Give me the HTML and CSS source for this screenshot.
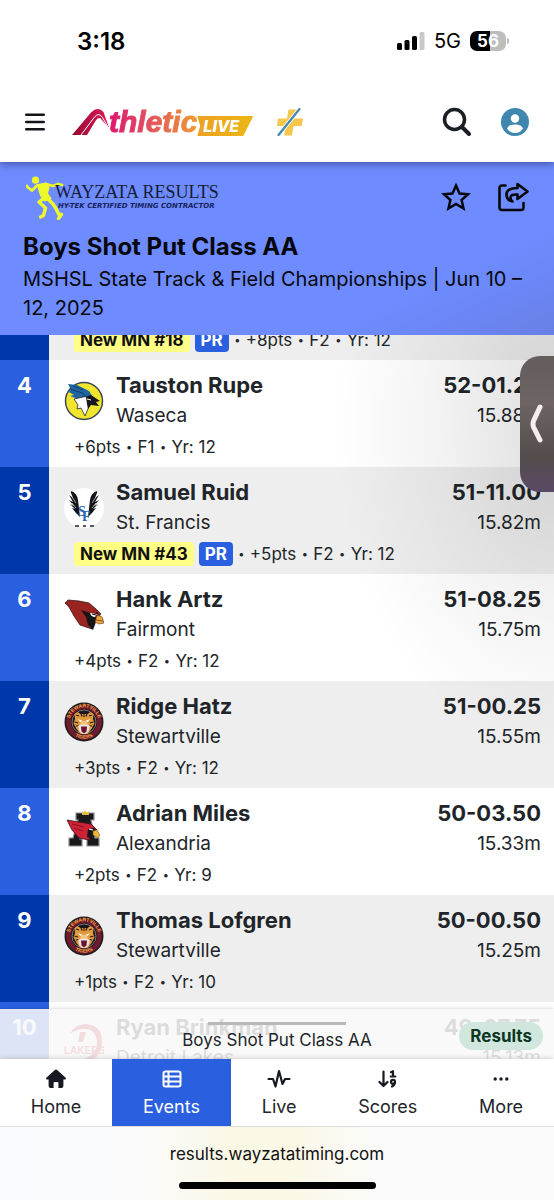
FILE: index.html
```html
<!DOCTYPE html>
<html lang="en">
<head>
<meta charset="utf-8">
<meta name="viewport" content="width=device-width, initial-scale=1">
<title>Boys Shot Put Class AA</title>
<link rel="stylesheet" href="styles.css">
</head>
<body>
<svg class="defs" width="0" height="0" aria-hidden="true">
  <symbol id="tiger" viewBox="0 0 40 40">
    <circle cx="20" cy="20" r="19.5" fill="#211c20"/>
    <circle cx="20" cy="20" r="17.8" fill="#701b2c"/>
    <circle cx="20" cy="20" r="13" fill="#17161a"/>
    <circle cx="20" cy="20" r="12" fill="none" stroke="#a9a4a4" stroke-width=".7"/>
    <path id="arcTop" d="M6 24A14.6 14.6 0 1 1 34 24" fill="none"/>
    <path id="arcLow" d="M8 32A18 18 0 0 0 32 32" fill="none"/>
    <text class="crest-text"><textPath href="#arcTop" startOffset="50%" text-anchor="middle">STEWARTVILLE</textPath></text>
    <text class="crest-text"><textPath href="#arcLow" startOffset="50%" text-anchor="middle">TIGERS</textPath></text>
    <path d="M10.500 12l3-2 3 2h7l3-2 3 2-.5 5 1.500 4-3 6-4 5h-7l-4-5-3-6 1.500-4z" fill="#e09a3c"/>
    <path d="M12 13l3 1M28 13l-3 1M20 11v4M17 11.500l1 3M23 11.500l-1 3M10.500 20l3.500 1M29.500 20L26 21M12 24l3-.5M28 24l-3-.5" stroke="#2b1712" stroke-width="1.200"/>
    <path d="M13.500 17l5 1.800-2 1.200zM26.500 17l-5 1.800 2 1.200z" fill="#fff"/>
    <path d="M17.500 19h5l1.500 4-4 2-4-2z" fill="#f3c680"/>
    <path d="M14 23.500l6-1 6 1-1.500 6-3 2.500h-3l-3-2.500z" fill="#eee3df"/>
    <path d="M17 24.500h6l-.5 5-2.500 2-2.500-2z" fill="#6d1235"/>
  </symbol>
</svg>

<div class="app">
  <div class="status">
    <span class="clock">3:18</span>
    <span class="status-right">
      <svg width="28" height="18" viewBox="0 0 28 18" aria-hidden="true"><rect x="0" y="11" width="5" height="7" rx="1.500"/><rect x="7.500" y="8" width="5" height="10" rx="1.500"/><rect x="15" y="4" width="5" height="14" rx="1.500"/><rect x="22.500" y="0" width="5" height="18" rx="1.500" fill="#c9c9c9"/></svg>
      <span class="network">5G</span>
      <span class="battery">56</span>
    </span>
  </div>

  <header class="navbar">
    <button class="icon-btn menu" aria-label="Menu"><svg width="20" height="18" viewBox="0 0 20 18" stroke="#111418" stroke-width="2.400" stroke-linecap="round"><path d="M1.200 1.700h17.600M1.200 9h17.600M1.200 16.300h17.600"/></svg></button>
    <a class="brand" href="#" aria-label="Athletic Live">
      <svg width="38" height="28" viewBox="0 0 38 28" aria-hidden="true">
        <defs><linearGradient id="red" x1="0" x2="1"><stop stop-color="#96092e"/><stop offset="1" stop-color="#e0185c"/></linearGradient></defs>
        <path d="M0 27L19 4.500Q26-2 31.500 4L37 19.500Q33 16 29.500 11.500 26.500 8 23.500 13L15 27z" fill="url(#red)"/>
        <path d="M9 27L22.500 9q4.500-5 8 .5L36.500 20" fill="none" stroke="#fff" stroke-width="1"/>
      </svg>
      <span class="brand-name">thletic</span><span class="brand-live">LIVE</span>
    </a>
    <svg class="plus" width="28" height="28" viewBox="0 0 28 28" aria-hidden="true"><path d="M12.500 1.500h7.500l-1.500 9H27l-1.200 7.500h-8.300L16 27.500H8.300L9.800 18H1l1-7.500h9z" fill="#f6c74a"/><path d="M23.500 1L2.500 27" stroke="#fff" stroke-width="4"/><path d="M23.500 1L2.500 27" stroke="#4289ad" stroke-width="2.200" stroke-linecap="round"/></svg>
    <span class="nav-actions">
      <button class="icon-btn" aria-label="Search"><svg width="30" height="30" viewBox="0 0 30 30" fill="none" stroke="#1b1f24" stroke-linecap="round"><circle cx="12.500" cy="12.500" r="10" stroke-width="3.500"/><path d="M20 20l7 7" stroke-width="4"/></svg></button>
      <button class="icon-btn" aria-label="Account"><svg width="28" height="28" viewBox="0 0 28 28"><circle cx="14" cy="14" r="14" fill="#3f87ae"/><circle cx="14" cy="10.500" r="4.200" fill="#fff"/><path d="M6 20.500q1.500-4 8-4t8 4q-3 4.500-8 4.500t-8-4.500z" fill="#fff"/></svg></button>
    </span>
  </header>

  <section class="event">
    <div class="event-top">
      <div class="timer">
        <svg class="runner" width="38" height="44" viewBox="0 0 38 44" aria-hidden="true"><g fill="none" stroke="#eef92b" stroke-linecap="round" stroke-linejoin="round"><circle cx="9.500" cy="4.200" r="3.600" fill="#eef92b" stroke="none"/><path d="M12 9l8-1.500 2.500 4-1.500 6 3.500 5-6 2-3.500-5-2-6z" fill="#eef92b" stroke-width="2"/><path d="M11 9.500L6 14.500l-4-3M1.500 11L1 10" stroke-width="2.800"/><path d="M20 8l7 2 5-2 4 1" stroke-width="2.800"/><path d="M18 22l-5 4 6.500 6-2 7.500-3 1.500" stroke-width="3.400"/><path d="M22 22l6 6 3 4.500 2.500 5.500 3 .5-3 4" stroke-width="3.400" transform="translate(-1)"/></g></svg>
        <div class="timer-text"><span class="timer-name">WAYZATA RESULTS</span><span class="timer-sub">HY-TEK CERTIFIED TIMING CONTRACTOR</span></div>
      </div>
      <div class="event-actions">
        <button class="icon-btn" aria-label="Favorite"><svg width="30" height="30" viewBox="0 0 30 30" fill="none" stroke="#05070c" stroke-width="2.500"><path d="M15 3.500l3.500 8 8.500.8-6.400 5.700 1.900 8.500-7.500-4.500-7.500 4.500 1.900-8.500L3 12.300l8.500-.8z"/></svg></button>
        <button class="icon-btn" aria-label="Share"><svg width="32" height="30" viewBox="0 0 32 30" fill="none" stroke="#05070c" stroke-width="2.600" stroke-linecap="round" stroke-linejoin="round"><path d="M8.500 3.500H5q-2.500 0-2.500 2.500v19.500q0 2.500 2.500 2.500h19q2.500 0 2.500-2.500V21"/><path d="M20.500 2l10 7.500-10 7.500v-4.500q-7-.5-7 3 0 2.500 2 4-6-1-6-7 0-6.500 11-6.500z"/></svg></button>
      </div>
    </div>
    <h1>Boys Shot Put Class AA</h1>
    <p>MSHSL State Track &amp; Field Championships | Jun 10 – 12, 2025</p>
  </section>

  <main class="board">
    <ol class="results">
      <li class="row row-clipped">
        <span class="rank"></span>
        <div class="entry"><div class="meta"><mark>New MN #18</mark><b class="pr">PR</b><i>•</i>+8pts<i>•</i>F2<i>•</i>Yr: 12</div></div>
      </li>
      <li class="row">
        <span class="rank">4</span>
        <div class="entry"><div class="main-line">
          <svg class="crest" viewBox="0 0 40 40" aria-hidden="true"><circle cx="20" cy="20" r="18.500" fill="#f2e52d" stroke="#39485a" stroke-width="1.500"/><path d="M4 3l9 1 12 6 4 6-7 4-8-2-8-3 4-1-7-4 4-1z" fill="#1e65a2"/><path d="M6 8l12 4 6 5M9 5l10 4" stroke="#123b65" fill="none"/><path d="M10 18l9-2 7-1 4 4-4 4-5 12-4-8-4 1 1-4z" fill="#fff" stroke="#1c2530" stroke-width=".8"/><path d="M22 16l5-2 9 6-4 1 3 4-8-1-3 4-1-5z" fill="#15171c"/><path d="M23 18l4 1" stroke="#fff"/></svg>
          <div class="who"><strong>Tauston Rupe</strong><span>Waseca</span></div>
          <div class="mark"><strong>52-01.25</strong><span>15.88m</span></div>
        </div><div class="meta">+6pts<i>•</i>F1<i>•</i>Yr: 12</div></div>
      </li>
      <li class="row">
        <span class="rank">5</span>
        <div class="entry"><div class="main-line">
          <svg class="crest" viewBox="0 0 40 40" aria-hidden="true"><circle cx="20" cy="20" r="20" fill="#fff"/><g fill="#121418"><path d="M7 3q6 2 7 9l2 17-4-4-4-5 3 1-5-5 4 2-5-6 4 2-4-7 4 3-2-5z"/><path d="M33 3q-6 2-7 9l-2 17 4-4 4-5-3 1 5-5-4 2 5-6-4 2 4-7-4 3 2-5z"/></g><path d="M8 9l4 6M8 15l4 5M32 9l-4 6M32 15l-4 5" stroke="#fff" stroke-width=".6"/><text x="14" y="28" class="sf">S</text><text x="18" y="33" class="sf">F</text><path d="M11 38h4M19 38h3M26 38h4" stroke="#56585c" stroke-width="2"/></svg>
          <div class="who"><strong>Samuel Ruid</strong><span>St. Francis</span></div>
          <div class="mark"><strong>51-11.00</strong><span>15.82m</span></div>
        </div><div class="meta"><mark>New MN #43</mark><b class="pr">PR</b><i>•</i>+5pts<i>•</i>F2<i>•</i>Yr: 12</div></div>
      </li>
      <li class="row">
        <span class="rank">6</span>
        <div class="entry"><div class="main-line">
          <svg class="crest" viewBox="0 -4 40 40" aria-hidden="true"><path d="M1 4l3-3 11 1 10 2 7 6 5 5-7 8-2 7-12-4-6-9-5-9z" fill="#992421" stroke="#3a1715" stroke-width=".8"/><path d="M17 11l12 4 5-2-2 10-3 8-5-5-2-8z" fill="#151416"/><path d="M26 14l7 1-2 3q-4 0-5-4z" fill="#fff"/><path d="M28 15l4 1" stroke="#111" stroke-width="1.200"/><path d="M33 16l5 2 2 6-5 1-4-2z" fill="#f0a33e" stroke="#5b3413" stroke-width=".6"/><path d="M32 21l7 1" stroke="#5b3413" stroke-width=".7"/></svg>
          <div class="who"><strong>Hank Artz</strong><span>Fairmont</span></div>
          <div class="mark"><strong>51-08.25</strong><span>15.75m</span></div>
        </div><div class="meta">+4pts<i>•</i>F2<i>•</i>Yr: 12</div></div>
      </li>
      <li class="row">
        <span class="rank">7</span>
        <div class="entry"><div class="main-line">
          <svg class="crest" aria-hidden="true"><use href="#tiger"/></svg>
          <div class="who"><strong>Ridge Hatz</strong><span>Stewartville</span></div>
          <div class="mark"><strong>51-00.25</strong><span>15.55m</span></div>
        </div><div class="meta">+3pts<i>•</i>F2<i>•</i>Yr: 12</div></div>
      </li>
      <li class="row">
        <span class="rank">8</span>
        <div class="entry"><div class="main-line">
          <svg class="crest" viewBox="0 0 40 40" aria-hidden="true"><path d="M12 4h18v7h-3l4 18h4v8H23v-7h2l-1-4h-7l-1 4h2v7H5v-8h4l5-18h-2z" fill="#19191b" stroke="#8e8f91" stroke-width="1.200"/><path d="M18 2l1.500 2L21 1l1.500 3L25 2v4h-7z" fill="#e8bd3f"/><path d="M3 11l12 2 12 2 6 6-6 4-2 6-10-2-7-8z" fill="#cf2135" stroke="#371015" stroke-width=".8"/><path d="M8 15l12 3M10 19l9 3" stroke="#861522" fill="none"/><path d="M24 20l7-1 1 5-4 6-5-2z" fill="#161518"/><path d="M25 20l4 1" stroke="#fff" stroke-width="1.200"/><path d="M29 22l4-1 3 5-2 3-5-3z" fill="#edb63b" stroke="#554015" stroke-width=".5"/></svg>
          <div class="who"><strong>Adrian Miles</strong><span>Alexandria</span></div>
          <div class="mark"><strong>50-03.50</strong><span>15.33m</span></div>
        </div><div class="meta">+2pts<i>•</i>F2<i>•</i>Yr: 9</div></div>
      </li>
      <li class="row">
        <span class="rank">9</span>
        <div class="entry"><div class="main-line">
          <svg class="crest" aria-hidden="true"><use href="#tiger"/></svg>
          <div class="who"><strong>Thomas Lofgren</strong><span>Stewartville</span></div>
          <div class="mark"><strong>50-00.50</strong><span>15.25m</span></div>
        </div><div class="meta">+1pts<i>•</i>F2<i>•</i>Yr: 10</div></div>
      </li>
      <li class="row">
        <span class="rank">10</span>
        <div class="entry"><div class="main-line">
          <svg class="crest" viewBox="0 0 40 40" aria-hidden="true"><path d="M6 11Q11 1 22 1q16 2 16 17 0 16-14 21H14l12-6q8-6 7-15Q31 6 21 6q-9 0-15 5z" fill="#c91f2e"/><path d="M16 9h6l-3 10h-5z" fill="#c91f2e"/><text x="0" y="31" class="lakers">LAKERS</text></svg>
          <div class="who"><strong>Ryan Brinkman</strong><span>Detroit Lakes</span></div>
          <div class="mark"><strong>49-07.75</strong><span>15.13m</span></div>
        </div></div>
      </li>
    </ol>
    <div class="shade"></div>
    <button class="drawer-tab" aria-label="Open side panel"><svg width="14" height="40" viewBox="0 0 14 40" fill="none" stroke="#f4eef0" stroke-width="5" stroke-linecap="round" stroke-linejoin="round"><path d="M10 3L3.500 17q-1 3 0 6L10 36"/></svg></button>
    <div class="sheet">
      <span class="handle"></span>
      <span class="sheet-title">Boys Shot Put Class AA</span>
      <span class="state">Results</span>
    </div>
  </main>

  <nav class="tabs">
    <a href="#"><svg width="22" height="20" viewBox="0 0 22 20" fill="#171a20"><path d="M9.600 1.200q1.400-1.200 2.800 0l8.300 7.500q1 1.600-.8 1.800h-1.500V17q0 2-2 2h-3v-5q0-1-1-1h-2.800q-1 0-1 1v5h-3q-2 0-2-2v-6.500H2.100q-1.800-.2-.8-1.800z"/></svg>Home</a>
    <a href="#" class="active" aria-current="page"><svg width="20" height="20" viewBox="0 0 20 20" fill="none" stroke="#fff" stroke-width="2"><rect x="1.500" y="2.500" width="17" height="15" rx="2"/><path d="M2 7.500h16M2 12.500h16M6.500 3v14"/></svg>Events</a>
    <a href="#"><svg width="24" height="20" viewBox="0 0 24 20" fill="none" stroke="#171a20" stroke-width="2.200" stroke-linecap="round" stroke-linejoin="round"><path d="M1.500 10H6l2.500 7.500L12 2l3.500 13L18 10h4.500"/></svg>Live</a>
    <a href="#"><svg width="20" height="20" viewBox="0 0 20 20" fill="none" stroke="#171a20" stroke-width="2.200" stroke-linecap="round" stroke-linejoin="round"><path d="M5.500 2.500v14M1.500 13l4 4 4-4M13 3.200l2-1v5.300M12.700 7.500h4.600"/><circle cx="15" cy="12.800" r="2"/><path d="M17 13q0 3-3 4.500"/></svg>Scores</a>
    <a href="#"><svg width="20" height="20" viewBox="0 0 20 20" fill="#171a20"><circle cx="4.200" cy="10" r="1.700"/><circle cx="10" cy="10" r="1.700"/><circle cx="15.800" cy="10" r="1.700"/></svg>More</a>
  </nav>

  <footer class="browser">
    <span>results.wayzatatiming.com</span>
    <i class="home-bar"></i>
  </footer>
</div>
</body>
</html>
```

FILE: styles.css
```css
* { box-sizing: border-box; }

body {
  margin: 0;
  font-family: Inter, "Liberation Sans", sans-serif;
  color: #212529;
  background: #fff;
}

.defs { position: absolute; }
a { color: inherit; text-decoration: none; }
svg { display: block; flex: none; }

.app {
  display: flex;
  flex-direction: column;
  height: 100vh;
  overflow: hidden;
}

.icon-btn {
  display: flex;
  padding: 0;
  border: 0;
  background: none;
}

/* Phone status bar */
.status {
  display: flex;
  justify-content: space-between;
  align-items: center;
  height: 82px;
  padding: 0 48px 0 77px;
  flex: none;
  position: relative;
  z-index: 3;
  background: #fff;
  color: #000;
}
.clock { font-size: 24px; font-weight: 600; }
.status-right { display: flex; align-items: center; gap: 9px; }
.network { font-size: 20px; }
.battery {
  position: relative;
  width: 36px;
  height: 20px;
  border-radius: 7px;
  background: linear-gradient(90deg, #000 56%, #bdbdbd 56%);
  color: #fff;
  font-size: 17px;
  font-weight: 700;
  line-height: 20px;
  text-align: center;
}
.battery::after {
  content: "";
  position: absolute;
  right: -3px;
  top: 7px;
  width: 2px;
  height: 6px;
  border-radius: 0 2px 2px 0;
  background: #bdbdbd;
}

/* Site navigation */
.navbar {
  display: flex;
  align-items: center;
  height: 80px;
  padding: 0 25px;
  flex: none;
  position: relative;
  z-index: 2;
  background: #fff;
  box-shadow: 0 2px 8px rgba(20, 25, 70, .5);
}
.brand { display: flex; align-items: flex-end; height: 28px; margin-left: 27px; }
.brand-name {
  margin-left: -1px;
  font: italic 700 30px/28px "Liberation Sans", Arial, sans-serif;
  background: linear-gradient(90deg, #dd1670, #e2575a 50%, #ee9a34);
  background-clip: text;
  -webkit-background-clip: text;
  color: transparent;
  -webkit-text-stroke: 1px transparent;
}
.brand-live {
  width: 56px;
  height: 20px;
  padding-left: 6px;
  background: linear-gradient(90deg, #eea021, #eab817);
  clip-path: polygon(0 0, 100% 0, 82% 100%, 0 100%, 5% 50%);
  color: #fff;
  font: italic 800 16px/20px Inter, sans-serif;
}
.plus { margin-left: 23px; }
.nav-actions { display: flex; align-items: center; gap: 29px; margin-left: auto; }

/* Event heading */
.event {
  flex: none;
  padding: 12px 25px 12px 23px;
  background: linear-gradient(155deg, #6e8cff 75%, #687fe6);
  color: #05070c;
}
.event-top { display: flex; justify-content: space-between; height: 46px; margin-bottom: 12px; }
.timer { display: flex; padding: 2px 0 0 3px; }
.timer-text { display: flex; flex-direction: column; margin-left: -9px; padding-top: 6px; white-space: nowrap; }
.timer-name { font: 18px/20px "Liberation Serif", serif; color: #151b38; }
.timer-sub { padding-left: 3px; font: italic 700 7px/8px "DejaVu Sans", sans-serif; color: #18235c; }
.event-actions { display: flex; align-items: center; gap: 26px; }
.event h1 { margin: 0 0 3px; font-size: 24px; line-height: 30px; font-weight: 700; }
.event p { margin: 0; font-size: 20px; line-height: 29px; }

/* Results */
.board { position: relative; flex: 1; min-height: 0; }
.results { height: 100%; margin: 0; padding: 0; list-style: none; overflow: hidden; }
.row { display: flex; background: #fff; }
.row:nth-child(odd) { background: #eee; }
.rank {
  flex: none;
  width: 49px;
  padding-top: 10px;
  background: #2a60df;
  color: #fff;
  font-size: 22px;
  line-height: 30px;
  font-weight: 700;
  text-align: center;
}
.row:nth-child(odd) .rank { background: #0037ab; }
.entry { flex: 1; min-width: 0; padding: 10px 13px 7px 15px; }
.row-clipped { height: 25px; overflow: hidden; align-items: flex-end; }
.row-clipped .rank { align-self: stretch; }
.row-clipped .entry { padding-top: 0; }
.main-line { display: flex; align-items: center; }
.crest { width: 40px; height: 40px; }
.who { flex: 1; padding-left: 12px; }
.who, .mark { display: flex; flex-direction: column; white-space: nowrap; }
.mark { text-align: right; }
.who strong, .mark strong { font-size: 22px; line-height: 30px; font-weight: 700; }
.who span, .mark span { font-size: 19px; line-height: 32px; }
.meta {
  display: flex;
  align-items: center;
  height: 26px;
  margin-top: 2px;
  padding-left: 10px;
  font-size: 17px;
  white-space: nowrap;
}
.meta i { width: 17px; font-size: 11px; font-style: normal; text-align: center; }
.meta mark, .pr { height: 24px; border-radius: 4px; font-weight: 700; line-height: 24px; }
.meta mark { padding: 0 6px; background: #ffff86; color: #111; }
.pr { margin-left: 5px; padding: 0 6px; background: #2a60df; color: #fff; }
.crest-text { font: 700 5px "Liberation Sans", sans-serif; fill: #f0a844; }
.sf { font: 700 14px "Liberation Serif", serif; fill: #2d65b4; }
.lakers { font: 700 10px "Liberation Sans", sans-serif; fill: #c91f2e; }

.shade {
  position: absolute;
  inset: 0;
  pointer-events: none;
  background: radial-gradient(ellipse 220px 330px at 100% 90px, rgba(0, 0, 0, .13), rgba(0, 0, 0, .05) 50%, transparent);
}
.drawer-tab {
  position: absolute;
  right: 0;
  top: 21px;
  display: flex;
  align-items: center;
  width: 34px;
  height: 136px;
  padding: 0 0 0 10px;
  border: 0;
  border-radius: 20px 0 0 20px;
  background: linear-gradient(#645c5d, #6d6463 35%, #544c4c 75%, #5a4a66);
}
.sheet {
  position: absolute;
  left: 0;
  right: 0;
  bottom: 0;
  display: flex;
  flex-direction: column;
  align-items: center;
  height: 50px;
  padding-top: 13px;
  background: rgba(248, 248, 248, .87);
  box-shadow: 0 0 4px rgba(0, 0, 0, .2);
}
.handle { width: 138px; height: 3px; background: #b9b9b9; }
.sheet-title { font-size: 17px; line-height: 30px; }
.state {
  position: absolute;
  right: 11px;
  top: 13px;
  padding: 0 11px;
  border-radius: 14px;
  background: #d1e7dd;
  color: #0a3622;
  font-size: 17px;
  line-height: 28px;
  font-weight: 700;
}

/* Bottom tabs */
.tabs {
  position: relative;
  display: flex;
  flex: none;
  height: 68px;
  border-bottom: 1px solid #ddd;
  background: #fff;
  box-shadow: 0 0 6px rgba(0, 0, 0, .2);
}
.tabs a {
  display: flex;
  flex: 1 1 auto;
  flex-direction: column;
  align-items: center;
  gap: 5px;
  padding-top: 10px;
  font-size: 18px;
  line-height: 26px;
}
.tabs .active { background: #2a60df; color: #fff; }

.browser {
  display: flex;
  flex: none;
  flex-direction: column;
  align-items: center;
  position: relative;
  height: 73px;
  padding-top: 14px;
  background: linear-gradient(90deg, #f8faff, #fafafa 25%, #fbf8e6 42%, #fbf8e6 52%, #fafafa 68%, #fafafa);
  color: #111;
  font-size: 17px;
  line-height: 26px;
}
.home-bar { width: 197px; height: 7px; margin-top: 15px; border-radius: 4px; background: #000; }
```
